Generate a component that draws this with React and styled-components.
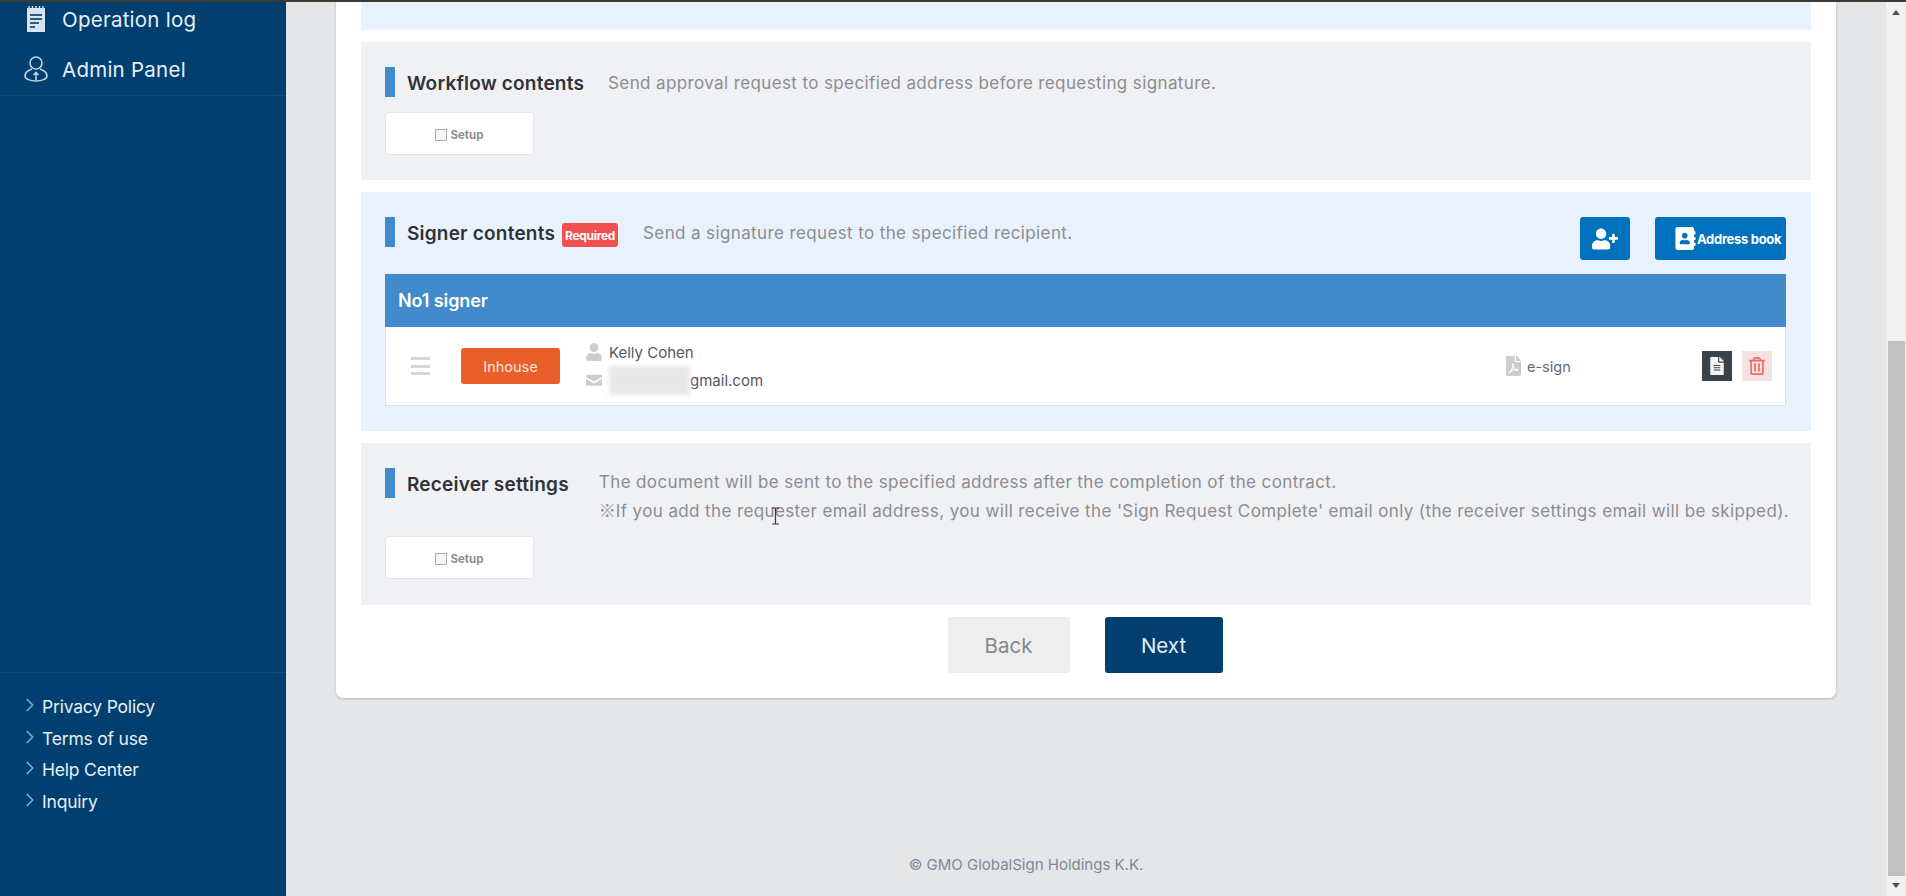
import React from 'react';
import styled, { createGlobalStyle } from 'styled-components';
import { FaUser, FaUserPlus, FaAddressBook, FaFilePdf, FaFileAlt, FaRegTrashAlt } from 'react-icons/fa';
import { FiChevronRight } from 'react-icons/fi';

const fontStack = `Inter, "Noto Sans", "Liberation Sans", sans-serif`;

const GlobalStyle = createGlobalStyle`
  html, body {
    margin: 0;
    padding: 0;
    height: 896px;
    overflow: hidden;
    background: #e4e6e8;
    font-family: ${fontStack};
  }
  * { box-sizing: border-box; }
`;

const Page = styled.div`
  width: 1906px;
  height: 896px;
  display: flex;
  flex-direction: column;
  overflow: hidden;
  border-top: 2px solid #3b3a34;
`;
const Body = styled.div`
  flex: 1;
  min-height: 0;
  display: flex;
`;

const Sidebar = styled.aside`
  width: 286px;
  flex: none;
  display: flex;
  flex-direction: column;
  overflow: hidden;
  background: #003f6f;
  color: #e8f0f6;
`;
const NavList = styled.nav`
  margin-top: -8px;
  padding-bottom: 1px;
  border-bottom: 1px solid #0f4d7d;
`;
const NavItem = styled.div`
  height: 50px;
  padding-left: 24px;
  display: flex;
  align-items: center;
  gap: 14px;
  font-size: 20.5px;
  letter-spacing: 0.25px;
  color: #e6eff5;
`;
const NavIcon = styled.svg`
  width: 24px;
  height: 28px;
  flex: none;
`;
const SideLinks = styled.div`
  margin-top: auto;
  height: 224px;
  padding: 18px 0 0 25px;
  border-top: 1px solid #0f4d7d;
`;
const SideLink = styled.div`
  height: 31.5px;
  display: flex;
  align-items: center;
  gap: 6px;
  font-size: 17.5px;
  letter-spacing: -0.2px;
  color: #e6eff5;
  svg {
    width: 22px;
    height: 22px;
    flex: none;
    margin: -3px -5px 0 -6px;
    color: #8fa9c0;
    stroke-width: 1.8;
  }
`;

const Main = styled.main`
  flex: 1;
  min-width: 0;
  padding: 0 50px;
  display: flex;
  flex-direction: column;
`;
const Card = styled.div`
  background: #fff;
  padding: 0 25px;
  height: 696px;
  flex: none;
  border-radius: 0 0 7px 7px;
  box-shadow: 0 1px 3px rgba(0, 0, 0, 0.22);
`;
const Section = styled.section`
  background: ${p => (p.$tint === 'blue' ? '#e9f2fc' : '#eff1f4')};
  margin-bottom: 12px;
  height: ${p => p.$height}px;
  padding: ${p => p.$pad}px 25px 0 24px;
`;
const HeadRow = styled.div`
  display: flex;
  align-items: flex-start;
`;
const Bar = styled.span`
  width: 10px;
  height: 30px;
  flex: none;
  background: #418acb;
  margin-right: 12px;
`;
const Title = styled.h2`
  margin: 4px 0 0;
  font-size: 19px;
  line-height: 26px;
  font-weight: 600;
  letter-spacing: 0.2px;
  color: #2f3338;
  white-space: nowrap;
`;
const Desc = styled.p`
  margin: ${p => p.$top || 0}px 0 0 ${p => p.$gap}px;
  font-size: 17px;
  line-height: 28px;
  letter-spacing: 0.38px;
  color: #8b8d90;
  white-space: nowrap;
`;
const RefMark = styled.span`
  font-family: "Noto Sans CJK JP", sans-serif;
  letter-spacing: 0;
`;
const Badge = styled.span`
  margin: 6px 0 0 7px;
  width: 56px;
  height: 24px;
  flex: none;
  display: flex;
  align-items: center;
  justify-content: center;
  border-radius: 3px;
  background: #f0504f;
  color: #fff;
  font-size: 12px;
  font-weight: 700;
  letter-spacing: -0.3px;
`;
const SetupButton = styled.button`
  display: flex;
  align-items: center;
  justify-content: center;
  gap: 3px;
  width: 149px;
  height: 43px;
  margin-top: ${p => p.$top}px;
  padding: 2px 0 0;
  background: #fff;
  border: 1px solid #e3e5e8;
  border-radius: 3px;
  font-family: inherit;
  font-size: 11.5px;
  font-weight: 700;
  color: #8f9195;
`;
const Check = styled.span`
  width: 12px;
  height: 12px;
  border: 1px solid #a9abae;
  background: #f7f7f7;
`;
const Actions = styled.div`
  margin-left: auto;
  display: flex;
  gap: 25px;
`;
const BlueButton = styled.button`
  height: 43px;
  width: ${p => p.$width}px;
  padding: 0 0 0 ${p => p.$inset || 0}px;
  display: flex;
  align-items: center;
  justify-content: ${p => (p.$inset ? 'flex-start' : 'center')};
  gap: 0;
  border: 0;
  border-radius: 3px;
  background: #0071bd;
  color: #fff;
  font-family: inherit;
  font-size: 13px;
  font-weight: 700;
  letter-spacing: -0.3px;
  white-space: nowrap;
`;
const SignerTable = styled.div`
  margin-top: 14px;
  height: 132px;
  display: flex;
  flex-direction: column;
  border: 1px solid #d9e2ec;
  border-top: 0;
  background: #fff;
`;
const TableHead = styled.div`
  height: 53px;
  margin: 0 -1px;
  padding-left: 13px;
  display: flex;
  align-items: center;
  background: #418acb;
  color: #fff;
  font-size: 18px;
  font-weight: 600;
  letter-spacing: -0.1px;
`;
const SignerRow = styled.div`
  flex: 1;
  padding-left: 25px;
  display: grid;
  grid-template-columns: 50px 124px 921px 196px auto;
  align-items: center;
`;
const Handle = styled.div`
  width: 19px;
  height: 18px;
  display: flex;
  flex-direction: column;
  justify-content: space-between;
  span { height: 3px; background: #d4d6d8; }
`;
const Inhouse = styled.div`
  width: 99px;
  height: 36px;
  display: flex;
  align-items: center;
  justify-content: center;
  border-radius: 3px;
  background: #e95f2b;
  color: #fde4d8;
  font-size: 14.5px;
`;
const Contact = styled.div`
  display: flex;
  flex-direction: column;
`;
const ContactLine = styled.div`
  height: 28px;
  display: flex;
  align-items: center;
  gap: 6px;
  font-size: 15px;
  color: #56595e;
  svg { width: 18px; height: 18px; color: #cbcdcf; flex: none; }
`;
const Redacted = styled.span`
  display: inline-block;
  width: 81px;
  height: 29px;
  flex: none;
  margin-right: -6px;
  background: #e8e8e8;
  filter: blur(2px);
`;
const SignType = styled.div`
  display: flex;
  align-items: center;
  gap: 6px;
  font-size: 14.5px;
  color: #66696e;
  svg { width: 15px; height: 20px; color: #cbcdcf; }
`;
const RowActions = styled.div`
  display: flex;
  gap: 10px;
`;
const IconButton = styled.div`
  width: 30px;
  height: 30px;
  display: flex;
  align-items: center;
  justify-content: center;
  background: ${p => (p.$danger ? '#f5e2e0' : '#3a424c')};
  color: ${p => (p.$danger ? '#ee6a62' : '#f4f4f4')};
  svg { width: 16px; height: 18px; }
`;
const CursorMark = styled.svg`
  position: absolute;
  left: 771px;
  top: 507px;
  width: 9px;
  height: 18px;
`;
const FootButtons = styled.div`
  display: flex;
  justify-content: center;
  gap: 35px;
  padding-right: 2px;
`;
const NavButton = styled.button`
  width: ${p => p.$width}px;
  height: 56px;
  border: 0;
  border-radius: 3px;
  background: ${p => (p.$primary ? '#023f6e' : '#eeeeef')};
  color: ${p => (p.$primary ? '#e5f0f7' : '#85878a')};
  font-family: inherit;
  font-size: 20.5px;
`;
const Copyright = styled.footer`
  margin-top: 156px;
  padding-right: 120px;
  text-align: center;
  font-size: 15px;
  line-height: 22px;
  color: #7c8a98;
`;

const Scrollbar = styled.div`
  width: 20px;
  flex: none;
  display: flex;
  flex-direction: column;
  align-items: center;
  background: #f1f1f1;
`;
const ScrollArrow = styled.span`
  flex: none;
  width: 0;
  height: 0;
  margin: ${p => (p.$down ? '7px 0 8px' : '8px 0 0')};
  border-left: 4.5px solid transparent;
  border-right: 4.5px solid transparent;
  border-bottom: ${p => (p.$down ? '0' : '5px solid #505050')};
  border-top: ${p => (p.$down ? '5px solid #505050' : '0')};
`;
const ScrollThumb = styled.div`
  width: 17px;
  height: 535px;
  margin-top: auto;
  background: #c1c1c1;
`;

const LogIcon = () => (
  <NavIcon viewBox="0 0 24 28">
    <path d="M3 3h18v24H3z" fill="#d9e4ec" />
    <path d="M5 1v4M8.5 1v4M12 1v4M15.5 1v4M19 1v4" stroke="#d9e4ec" strokeWidth="1.4" />
    <path d="M6 10h12M6 14h12M6 18h9M6 22h5" stroke="#2a5d85" strokeWidth="2" />
  </NavIcon>
);

const AdminIcon = () => (
  <NavIcon viewBox="0 0 24 28" fill="none" stroke="#c3d4e1" strokeWidth="1.6">
    <circle cx="12" cy="8" r="6" />
    <path d="M8 14c-4 1.5-7 4-7 7s5 5 11 5 11-2 11-5-3-5.5-7-7" />
    <path d="M12 25v-7M9.5 20l2.5-2.5 2.5 2.5" />
  </NavIcon>
);

const MailIcon = () => (
  <svg viewBox="0 0 17 17">
    <path d="M1 3.5h15v2.2L8.5 10 1 5.7zM1 7.5l7.5 4.3L16 7.5v6.5H1z" fill="currentColor" />
  </svg>
);

function App() {
  return (
    <Page>
      <GlobalStyle />
      <Body>
        <Sidebar>
          <NavList>
            <NavItem><LogIcon />Operation log</NavItem>
            <NavItem><AdminIcon />Admin Panel</NavItem>
          </NavList>
          <SideLinks>
            {['Privacy Policy', 'Terms of use', 'Help Center', 'Inquiry'].map(label => (
              <SideLink key={label}><FiChevronRight />{label}</SideLink>
            ))}
          </SideLinks>
        </Sidebar>

        <Main>
          <Card>
            <Section $tint="blue" $height={28} $pad={0} />
            <Section $height={138} $pad={25}>
              <HeadRow>
                <Bar />
                <Title>Workflow contents</Title>
                <Desc $gap={24} $top={2}>Send approval request to specified address before requesting signature.</Desc>
              </HeadRow>
              <SetupButton $top={15}><Check />Setup</SetupButton>
            </Section>
            <Section $tint="blue" $height={239} $pad={25}>
              <HeadRow>
                <Bar />
                <Title>Signer contents</Title>
                <Badge>Required</Badge>
                <Desc $gap={25} $top={2}>Send a signature request to the specified recipient.</Desc>
                <Actions>
                  <BlueButton $width={50}><FaUserPlus size={26} /></BlueButton>
                  <BlueButton $width={131} $inset={19}><FaAddressBook size={23} />Address book</BlueButton>
                </Actions>
              </HeadRow>
              <SignerTable>
                <TableHead>No1 signer</TableHead>
                <SignerRow>
                  <Handle><span /><span /><span /></Handle>
                  <Inhouse>Inhouse</Inhouse>
                  <Contact>
                    <ContactLine><FaUser />Kelly Cohen</ContactLine>
                    <ContactLine><MailIcon /><Redacted />gmail.com</ContactLine>
                  </Contact>
                  <SignType><FaFilePdf />e-sign</SignType>
                  <RowActions>
                    <IconButton><FaFileAlt /></IconButton>
                    <IconButton $danger><FaRegTrashAlt /></IconButton>
                  </RowActions>
                </SignerRow>
              </SignerTable>
            </Section>
            <Section $height={162} $pad={25}>
              <HeadRow>
                <Bar />
                <Title>Receiver settings</Title>
                <Desc $gap={30}>
                  The document will be sent to the specified address after the completion of the contract.<br />
                  <RefMark>※</RefMark>If you add the requester email address, you will receive the 'Sign Request Complete' email only (the receiver settings email will be skipped).
                </Desc>
              </HeadRow>
              <SetupButton $top={11}><Check />Setup</SetupButton>
            </Section>
            <FootButtons>
              <NavButton $width={122}>Back</NavButton>
              <NavButton $width={118} $primary>Next</NavButton>
            </FootButtons>
          </Card>
          <Copyright>© GMO GlobalSign Holdings K.K.</Copyright>
        </Main>

        <Scrollbar>
          <ScrollArrow />
          <ScrollThumb />
          <ScrollArrow $down />
        </Scrollbar>
      </Body>
      <CursorMark viewBox="0 0 9 18" fill="none" stroke="#333" strokeWidth="1.2">
        <path d="M1 1h7M4.5 1v16M1 17h7" />
      </CursorMark>
    </Page>
  );
}

export default App;
